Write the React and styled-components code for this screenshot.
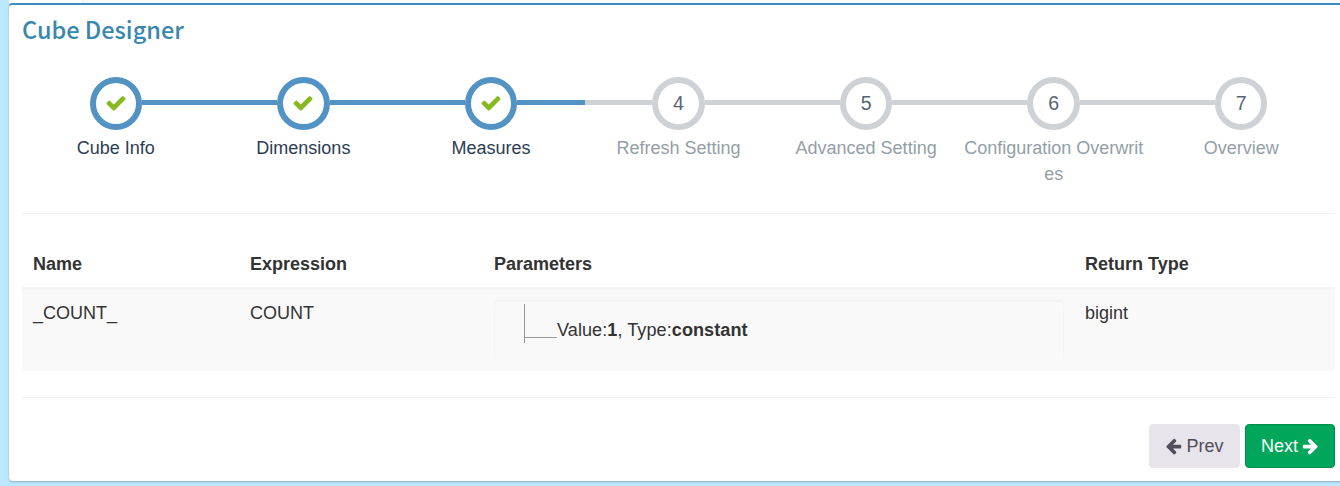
import React from "react";
import styled, { createGlobalStyle } from "styled-components";

const Global = createGlobalStyle`
  * { box-sizing: border-box; }
  body {
    margin: 0;
    background: #b9e8ff;
    color: #333;
    font-family: "Liberation Sans", Arial, sans-serif;
    font-size: 18px;
    line-height: 26px;
    overflow: hidden;
  }
`;

const Page = styled.div`
  height: 486px;
  padding-left: 9px;
  overflow: hidden;
`;

const TabStrip = styled.div`
  display: flex;
  height: 3px;
  background: #fafafa;
`;

const ActiveTab = styled.div`
  width: 74px;
  background: #fff;
  border-right: 1px solid #eee;
`;

const Box = styled.section`
  width: 1340px;
  height: 478px;
  padding: 0 22px 0 13px;
  background: #fff;
  border-top: 2px solid #3c8dbc;
  border-radius: 4px;
  box-shadow: 0 1px 2px rgba(0, 0, 0, 0.25);
`;

const Title = styled.h3`
  margin: 0;
  padding-top: 10px;
  height: 72px;
  color: #3a87ad;
  font-family: "Noto Sans CJK SC", "Open Sans", sans-serif;
  font-size: 23.5px;
  font-weight: 500;
  line-height: 28px;
`;

const Steps = styled.ol`
  display: flex;
  width: 1313px;
  height: 137px;
  margin: 0;
  padding: 0;
  list-style: none;
  border-bottom: 1px solid #eee;
`;

const StepItem = styled.li`
  flex: 1 1 0;
  min-width: 0;
  text-align: center;
`;

const Track = styled.div`
  display: flex;
  align-items: center;
  height: 53px;
`;

const Rail = styled.span`
  flex: 1;
  height: 5px;
  margin-bottom: 2px;
  background: ${(p) => (p.$hidden ? "transparent" : p.$done ? "#5293c4" : "#ced1d6")};
`;

const Ring = styled.span`
  display: flex;
  align-items: center;
  justify-content: center;
  width: 52.4px;
  height: 53px;
  padding-bottom: ${(p) => (p.$done ? 1 : 2)}px;
  border: 6px solid ${(p) => (p.$done ? "#5293c4" : "#ced1d6")};
  border-radius: 50%;
  background: #fff;
  color: #546474;
  font-size: 19.5px;
`;

const StepLabel = styled.div`
  margin-top: 5px;
  padding: 0 3.5px;
  color: ${(p) => (p.$done ? "#2b3d53" : "#949ea7")};
  word-break: break-all;
`;

const Table = styled.div`
  width: 1313px;
  margin-top: 38px;
`;

const Row = styled.div`
  display: grid;
  grid-template-columns: 217px 244px 591px 1fr;
`;

const HeadRow = styled(Row)`
  height: 38px;
  font-weight: 700;
  border-bottom: 3px solid #f4f4f4;
`;

const BodyRow = styled(Row)`
  height: 81px;
  background: #f9f9f9;
`;

const HeadCell = styled.div`
  padding-left: 11px;
  line-height: 25px;
`;

const Cell = styled.div`
  padding: 10px 11px;
`;

const Tree = styled.div`
  width: 570px;
  height: 60px;
  padding: 3px 0 0 29px;
  border: 1px solid #f4f4f4;
  border-bottom-color: #f8f8f8;
  border-radius: 4px;
  box-shadow: inset 0 1px 1px rgba(0, 0, 0, 0.03);
`;

const Node = styled.div`
  display: flex;
  height: 39px;
  padding-top: 13px;
  border-left: 1px solid #999;
  font-size: 18.08px;
`;

const Branch = styled.span`
  width: 32px;
  height: 21px;
  border-bottom: 1px solid #999;
`;

const NodeText = styled.span`
  letter-spacing: 0.06px;
`;

const Footer = styled.footer`
  display: flex;
  justify-content: flex-end;
  gap: 5px;
  width: 1313px;
  margin-top: 26px;
  padding-top: 26px;
  border-top: 1px solid #eee;
`;

const Button = styled.button`
  display: flex;
  align-items: center;
  justify-content: center;
  gap: 4px;
  width: ${(p) => (p.$primary ? 90 : 91)}px;
  height: 44px;
  padding: 0;
  border: 1px solid ${(p) => (p.$primary ? "#008d4c" : "#e7e4ec")};
  border-radius: 4px;
  background: ${(p) => (p.$primary ? "#00a65a" : "#e7e4ec")};
  color: ${(p) => (p.$primary ? "#fff" : "#524c5b")};
  font: inherit;
`;

const Glyph = styled.svg`
  display: block;
  flex: none;
  fill: ${(p) => p.$color || "currentColor"};
`;

const CHECK =
  "M1671 566q0 40-28 68l-724 724-136 136q-28 28-68 28t-68-28l-136-136-362-362q-28-28-28-68t28-68l136-136q28-28 68-28t68 28l294 295 656-657q28-28 68-28t68 28l136 136q28 28 28 68z";
const LEFT =
  "M1664 896v128q0 53-32.500 90.500t-84.500 37.500h-704l293 294q38 36 38 90t-38 90l-75 76q-37 37-90 37-52 0-91-37l-651-652q-37-37-37-90 0-52 37-91l651-650q38-38 91-38 52 0 90 38l75 74q38 38 38 91t-38 91l-293 293h704q52 0 84.500 37.500t32.500 90.500z";
const RIGHT =
  "M1600 960q0 54-37 91l-651 651q-39 37-91 37-51 0-90-37l-75-75q-38-38-38-91t38-91l293-293h-704q-52 0-84.500-37.500t-32.500-90.500v-128q0-53 32.500-90.500t84.500-37.500h704l-293-294q-38-36-38-90t38-90l75-75q38-38 90-38 53 0 91 38l651 651q37 35 37 90z";

const STEPS = [
  "Cube Info",
  "Dimensions",
  "Measures",
  "Refresh Setting",
  "Advanced Setting",
  "Configuration Overwrites",
  "Overview",
];
const CURRENT = 3;

function Step({ label, index }) {
  const done = index < CURRENT;
  return (
    <StepItem>
      <Track>
        <Rail $done={done} $hidden={index === 0} />
        <Ring $done={done}>
          {done ? (
            <Glyph $color="#87ba21" width="22" height="22" viewBox="0 0 1792 1792">
              <path d={CHECK} />
            </Glyph>
          ) : (
            index + 1
          )}
        </Ring>
        <Rail $done={done} $hidden={index === STEPS.length - 1} />
      </Track>
      <StepLabel $done={done}>{label}</StepLabel>
    </StepItem>
  );
}

export default function App() {
  return (
    <Page>
      <Global />
      <TabStrip>
        <ActiveTab />
      </TabStrip>
      <Box>
        <Title>Cube Designer</Title>
        <Steps>
          {STEPS.map((label, i) => (
            <Step key={label} label={label} index={i} />
          ))}
        </Steps>
        <Table>
          <HeadRow>
            <HeadCell>Name</HeadCell>
            <HeadCell>Expression</HeadCell>
            <HeadCell>Parameters</HeadCell>
            <HeadCell>Return Type</HeadCell>
          </HeadRow>
          <BodyRow>
            <Cell>_COUNT_</Cell>
            <Cell>COUNT</Cell>
            <Cell>
              <Tree>
                <Node>
                  <Branch />
                  <NodeText>
                    Value:<b>1</b>, Type:<b>constant</b>
                  </NodeText>
                </Node>
              </Tree>
            </Cell>
            <Cell>bigint</Cell>
          </BodyRow>
        </Table>
        <Footer>
          <Button>
            <Glyph width="17" height="18" viewBox="64 0 1664 1792">
              <path d={LEFT} />
            </Glyph>
            Prev
          </Button>
          <Button $primary>
            Next
            <Glyph width="17" height="18" viewBox="64 0 1664 1792">
              <path d={RIGHT} />
            </Glyph>
          </Button>
        </Footer>
      </Box>
    </Page>
  );
}
